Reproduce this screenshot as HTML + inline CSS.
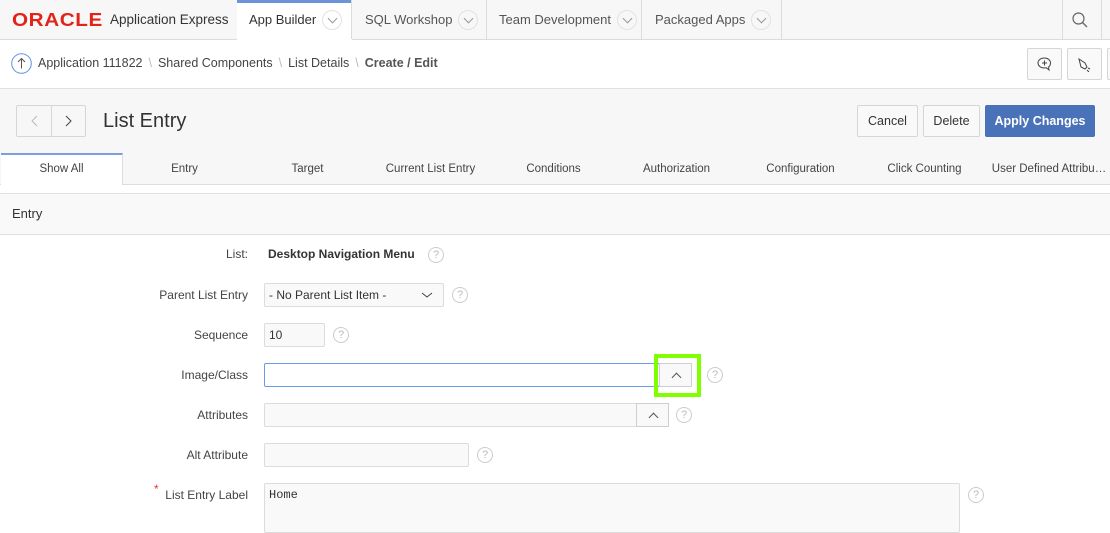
<!DOCTYPE html>
<html><head><meta charset="utf-8"><style>
*{box-sizing:border-box;margin:0;padding:0}
body{width:1110px;height:519px;overflow:hidden;background:#fff;font-family:"Liberation Sans",Arial,sans-serif;color:#333;position:relative;font-size:12px}
.a{position:absolute}
.top{left:0;top:0;width:1110px;height:40px;background:#f7f7f7;border-bottom:1px solid #dcdcdc}
.sep{top:0;width:1px;height:39px;background:#dcdcdc}
.tab{top:0;height:39px;font-size:13px;color:#555;line-height:39px}
.chev{display:inline-block;width:20px;height:20px;border:1px solid #e2e2e2;border-radius:50%;vertical-align:middle;margin-left:6px;position:relative;top:-1px}
.chev:after{content:"";position:absolute;left:6px;top:4px;width:6px;height:6px;border-right:1px solid #999;border-bottom:1px solid #999;transform:rotate(45deg)}
.bc{top:56px;font-size:12.5px;color:#444}
.slash{color:#bbb;margin:0 6px}
.btn{background:#f9f9f9;border:1px solid #d6d6d6;border-radius:2px;font-size:12.5px;color:#333;text-align:center;line-height:30px}
.t2{top:153px;height:32px;line-height:32px;font-size:11.5px;color:#444;text-align:center;width:123px}
.lbl{right:862px;font-size:12px;color:#444;text-align:right}
.inp{background:#f9f9f9;border:1px solid #dcdcdc;border-radius:2px;height:24px}
.help{width:16px;height:16px;border:1px solid #ccc;border-radius:50%;color:#bbb;font-size:11px;text-align:center;line-height:14px}
.up{background:#f9f9f9;border:1px solid #cfcfcf}
.up:after{content:"";position:absolute;left:13px;top:10px;width:6px;height:6px;border-left:1px solid #555;border-top:1px solid #555;transform:rotate(45deg)}
</style></head><body>
<div class="a top"></div>
<div class="a" style="left:12px;top:10px;font-size:18px;font-weight:bold;color:#e2231a;letter-spacing:0.5px;transform:scaleX(1.15);transform-origin:left;font-family:'Liberation Sans',sans-serif">ORACLE</div>
<div class="a" style="left:110px;top:12px;font-size:13.5px;color:#333">Application Express</div>
<div class="a" style="left:237px;top:0;width:115px;height:40px;background:#fff;border-top:3px solid #6c93d9"></div>
<div class="a tab" style="left:249px;color:#333">App Builder<span class="chev"></span></div>
<div class="a sep" style="left:351px"></div>
<div class="a tab" style="left:365px">SQL Workshop<span class="chev"></span></div>
<div class="a sep" style="left:486px"></div>
<div class="a tab" style="left:499px">Team Development<span class="chev"></span></div>
<div class="a sep" style="left:641px"></div>
<div class="a tab" style="left:655px">Packaged Apps<span class="chev"></span></div>
<div class="a sep" style="left:781px"></div>
<div class="a sep" style="left:1062px"></div>
<div class="a sep" style="left:1101px"></div>
<svg class="a" style="left:1071px;top:11px" width="18" height="18"><circle cx="7.5" cy="7.5" r="5.5" fill="none" stroke="#666" stroke-width="1.2"/><line x1="11.5" y1="11.5" x2="16" y2="16" stroke="#666" stroke-width="1.3"/></svg>

<div class="a" style="left:0;top:88px;width:1110px;height:1px;background:#e0e0e0"></div>
<svg class="a" style="left:11px;top:53px" width="21" height="21"><circle cx="10.5" cy="10.5" r="9.8" fill="none" stroke="#5b8fe6" stroke-width="1"/><path d="M10.5 15.5V5.5M7 9l3.5-3.5L14 9" fill="none" stroke="#555" stroke-width="1"/></svg>
<div class="a bc" style="left:38px">Application 111822<span class="slash">\</span>Shared Components<span class="slash">\</span>List Details<span class="slash">\</span><b style="color:#555">Create / Edit</b></div>
<div class="a btn" style="left:1027px;top:48px;width:35px;height:32px"></div>
<svg class="a" style="left:1036px;top:56px" width="17" height="16"><path d="M8.5 2C4.5 2 2 4.3 2 7s2.5 5 6.5 5c.7 0 1.3-.1 1.9-.2L13 14l-.4-3c1.2-.9 1.9-2.2 1.9-4 0-2.7-2.5-5-6-5z" fill="none" stroke="#444" stroke-width="1"/><path d="M8.5 4.5v5M6 7h5" stroke="#444" stroke-width="1"/></svg>
<div class="a btn" style="left:1067px;top:48px;width:35px;height:32px"></div>
<svg class="a" style="left:1076px;top:56px" width="17" height="16"><path d="M3 3l6 4 2 4-2 2-4-2z" fill="none" stroke="#444"/><path d="M12 12l2 1M11 14l2 2" stroke="#444"/></svg>
<div class="a btn" style="left:1107px;top:48px;width:10px;height:32px"></div>

<div class="a" style="left:0;top:89px;width:1110px;height:96px;background:#f7f7f7"></div>
<div class="a btn" style="left:16px;top:105px;width:70px;height:32px;background:#f7f7f7"></div>
<div class="a" style="left:51px;top:105px;width:1px;height:32px;background:#d6d6d6"></div>
<svg class="a" style="left:28px;top:114px" width="50" height="14"><path d="M9 2L4 7l5 5" fill="none" stroke="#bbb"/><path d="M38 2l5 5-5 5" fill="none" stroke="#444"/></svg>
<div class="a" style="left:103px;top:110px;font-size:20px;color:#333">List Entry</div>
<div class="a btn" style="left:857px;top:105px;width:61px;height:32px">Cancel</div>
<div class="a btn" style="left:923px;top:105px;width:57px;height:32px">Delete</div>
<div class="a btn" style="left:985px;top:105px;width:110px;height:32px;background:#4a72b8;border-color:#4a72b8;color:#fff;font-weight:bold">Apply Changes</div>

<div class="a" style="left:0;top:184px;width:1110px;height:1px;background:#ddd"></div>
<div class="a" style="left:1px;top:153px;width:122px;height:32px;background:#fff;border-top:2px solid #7a9fe0;border-right:1px solid #ddd"></div>
<div class="a t2" style="left:0">Show All</div>
<div class="a t2" style="left:123px">Entry</div>
<div class="a t2" style="left:246px">Target</div>
<div class="a t2" style="left:369px">Current List Entry</div>
<div class="a t2" style="left:492px">Conditions</div>
<div class="a t2" style="left:615px">Authorization</div>
<div class="a t2" style="left:739px">Configuration</div>
<div class="a t2" style="left:863px">Click Counting</div>
<div class="a t2" style="left:988px;width:122px">User Defined Attribu…</div>

<div class="a" style="left:0;top:193px;width:1110px;height:42px;background:#f9f9f9;border-top:1px solid #e0e0e0;border-bottom:1px solid #e0e0e0"></div>
<div class="a" style="left:12px;top:206px;font-size:13px;color:#333">Entry</div>

<div class="a lbl" style="top:247px">List:</div>
<div class="a" style="left:268px;top:247px;font-weight:bold;color:#333">Desktop Navigation Menu</div>
<div class="a help" style="left:428px;top:247px">?</div>

<div class="a lbl" style="top:288px">Parent List Entry</div>
<div class="a inp" style="left:264px;top:283px;width:180px;padding-left:4px;line-height:22px;color:#333">- No Parent List Item -</div>
<svg class="a" style="left:421px;top:290px" width="12" height="10"><path d="M1 3l5 4 5-4" fill="none" stroke="#444"/></svg>
<div class="a help" style="left:452px;top:287px">?</div>

<div class="a lbl" style="top:328px">Sequence</div>
<div class="a inp" style="left:264px;top:323px;width:61px;padding-left:4px;line-height:22px">10</div>
<div class="a help" style="left:333px;top:327px">?</div>

<div class="a lbl" style="top:368px">Image/Class</div>
<div class="a" style="left:264px;top:363px;width:396px;height:24px;border:1px solid #6a9be8;border-radius:2px;background:#fff"></div>
<div class="a up" style="left:659px;top:363px;width:33px;height:24px"></div>
<div class="a" style="left:654px;top:354px;width:47px;height:43px;border:4px solid #7fff00"></div>
<div class="a help" style="left:707px;top:367px">?</div>

<div class="a lbl" style="top:408px">Attributes</div>
<div class="a inp" style="left:264px;top:403px;width:373px"></div>
<div class="a up" style="left:636px;top:403px;width:33px;height:24px"></div>
<div class="a help" style="left:676px;top:407px">?</div>

<div class="a lbl" style="top:448px">Alt Attribute</div>
<div class="a inp" style="left:264px;top:443px;width:205px"></div>
<div class="a help" style="left:477px;top:447px">?</div>

<div class="a" style="left:154px;top:482px;color:#e33;font-size:12px">*</div>
<div class="a lbl" style="top:488px">List Entry Label</div>
<div class="a inp" style="left:264px;top:483px;width:696px;height:50px;padding:4px;font-family:'Liberation Mono',monospace;font-size:12px">Home</div>
<div class="a help" style="left:968px;top:487px">?</div>
</body></html>
